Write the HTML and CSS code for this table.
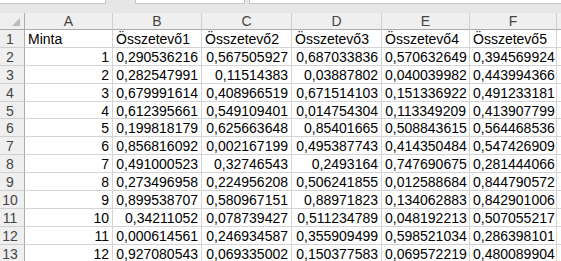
FILE: index.html
```html
<!DOCTYPE html>
<html lang="hu">
<head>
    <meta charset="UTF-8">
    <title>Munkalap</title>
    <link rel="stylesheet" href="styles.css">
</head>
<body>
    <div class="toolbar">
        <div class="box box-name"></div>
        <div class="box box-fx"></div>
        <div class="box box-formula"></div>
    </div>

    <div id="sheet" class="sheet">
        <div class="corner"><span class="corner-mark"></span></div>
        <div class="col-head">A</div>
        <div class="col-head">B</div>
        <div class="col-head">C</div>
        <div class="col-head">D</div>
        <div class="col-head">E</div>
        <div class="col-head">F</div>
        <div class="col-head col-rest"></div>
    </div>

    <script>
        const header = ["Minta", "Összetevő1", "Összetevő2", "Összetevő3", "Összetevő4", "Összetevő5"];
        const rows = [
            ["1", "0,290536216", "0,567505927", "0,687033836", "0,570632649", "0,394569924"],
            ["2", "0,282547991", "0,11514383", "0,03887802", "0,040039982", "0,443994366"],
            ["3", "0,679991614", "0,408966519", "0,671514103", "0,151336922", "0,491233181"],
            ["4", "0,612395661", "0,549109401", "0,014754304", "0,113349209", "0,413907799"],
            ["5", "0,199818179", "0,625663648", "0,85401665", "0,508843615", "0,564468536"],
            ["6", "0,856816092", "0,002167199", "0,495387743", "0,414350484", "0,547426909"],
            ["7", "0,491000523", "0,32746543", "0,2493164", "0,747690675", "0,281444066"],
            ["8", "0,273496958", "0,224956208", "0,506241855", "0,012588684", "0,844790572"],
            ["9", "0,899538707", "0,580967151", "0,88971823", "0,134062883", "0,842901006"],
            ["10", "0,34211052", "0,078739427", "0,511234789", "0,048192213", "0,507055217"],
            ["11", "0,000614561", "0,246934587", "0,355909499", "0,598521034", "0,286398101"],
            ["12", "0,927080543", "0,069335002", "0,150377583", "0,069572219", "0,480089904"]
        ];

        function addRow(sheet, num, values, cls) {
            const head = document.createElement("div");
            head.className = "row-head";
            head.textContent = num;
            sheet.appendChild(head);

            values.forEach(value => {
                const cell = document.createElement("div");
                cell.className = "cell " + cls;
                cell.textContent = value;
                sheet.appendChild(cell);
            });

            const rest = document.createElement("div");
            rest.className = "cell";
            sheet.appendChild(rest);
        }

        const sheet = document.getElementById("sheet");
        addRow(sheet, 1, header, "text");
        rows.forEach((row, i) => addRow(sheet, i + 2, row, "num"));
    </script>
</body>
</html>
```

FILE: styles.css
```css
* {
    box-sizing: border-box;
    margin: 0;
    padding: 0;
}

body {
    font-family: "Liberation Sans", Arial, sans-serif;
    font-size: 14px;
    background: #fff;
    width: 561px;
    height: 261px;
    overflow: hidden;
}

.toolbar {
    height: 13px;
    background: #e6e6e6;
    display: flex;
    align-items: flex-start;
    gap: 4px;
}

.box {
    height: 4px;
    background: #fff;
    border: 1px solid #c6c6c6;
    border-top: none;
}

.box-name {
    margin-left: -1px;
    width: 107px;
    margin-right: 25px;
}

.box-fx {
    width: 110px;
}

.box-formula {
    flex: 1;
    margin-right: -1px;
}

.sheet {
    display: grid;
    grid-template-columns: 25px 88px 89px 90px 90px 88px 87px 1fr;
    grid-template-rows: 17px repeat(13, 17.9px);
    color: #000;
}

.corner,
.col-head,
.row-head {
    background: #efefef;
    color: #444;
    border-right: 1px solid #d0d0d0;
    border-bottom: 1px solid #d0d0d0;
}

.corner {
    display: flex;
    justify-content: flex-end;
    align-items: flex-end;
    padding: 0 4px 3px 0;
    border-bottom-color: #ababab;
    border-right-color: #ababab;
}

.corner-mark {
    width: 0;
    height: 0;
    border-left: 8px solid transparent;
    border-bottom: 8px solid #bcbcbc;
}

.col-head {
    text-align: center;
    line-height: 16px;
    border-bottom-color: #ababab;
}

.col-rest {
    border-right: none;
}

.row-head {
    text-align: center;
    padding-right: 4px;
    line-height: 18px;
    border-right-color: #ababab;
}

.cell {
    border-right: 1px solid #d4d4d4;
    border-bottom: 1px solid #d4d4d4;
    line-height: 18px;
    white-space: nowrap;
    overflow: hidden;
    padding: 0 3px;
}

.cell.num {
    text-align: right;
}
```
